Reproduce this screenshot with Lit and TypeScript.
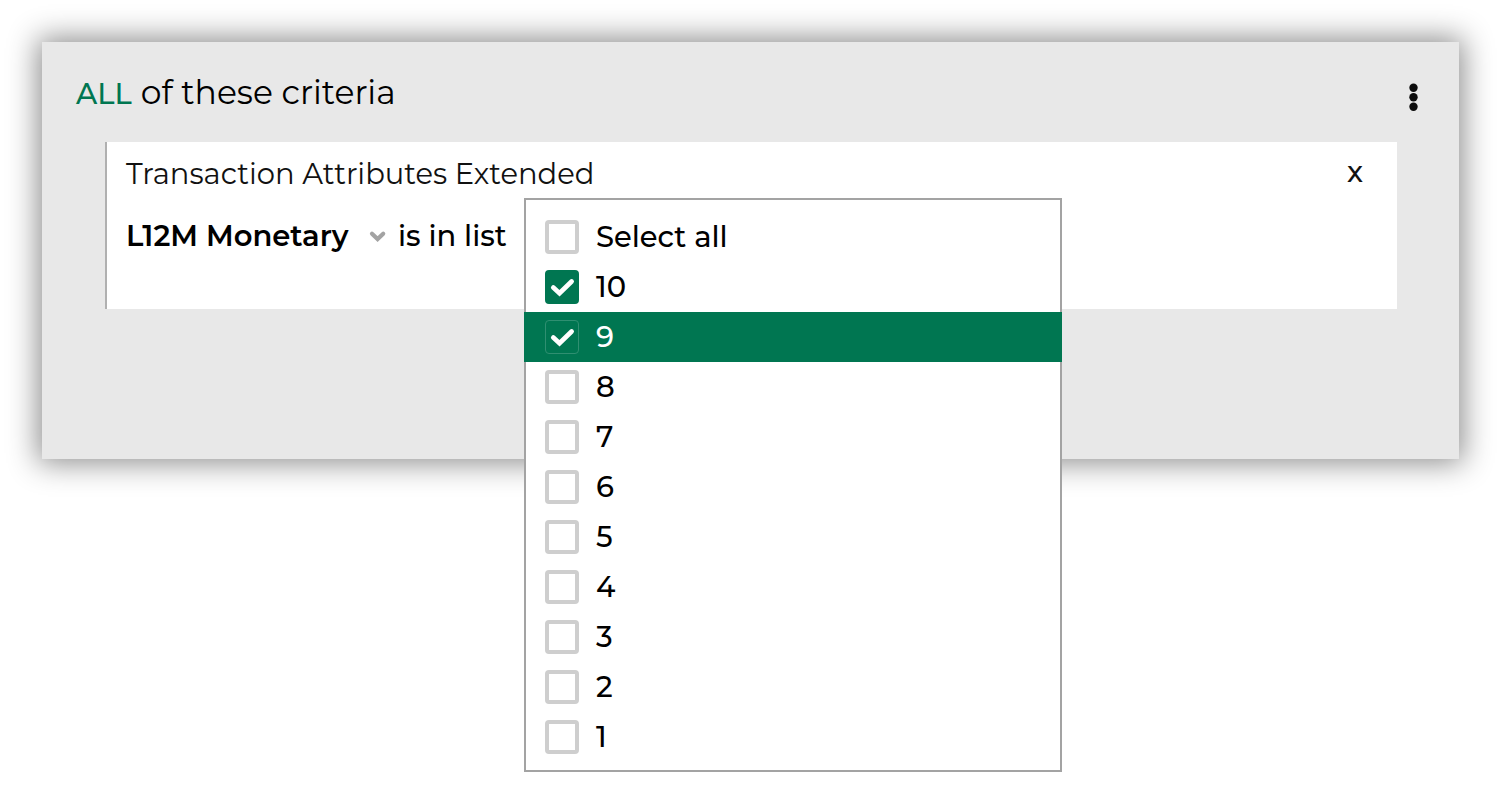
import { LitElement, html, css, svg, nothing } from "lit";
import { customElement, property, state } from "lit/decorators.js";
import { classMap } from "lit/directives/class-map.js";

interface Option {
  value: string;
  checked: boolean;
}

@customElement("check-option")
class CheckOption extends LitElement {
  @property() label = "";
  @property({ type: Boolean }) checked = false;
  @property({ type: Boolean }) active = false;

  static styles = css`
    :host {
      display: block;
    }
    .row {
      display: flex;
      align-items: center;
      gap: 17px;
      height: 50px;
      padding: 0 19px;
      color: #000;
      font-size: 29px;
      line-height: 36px;
      font-weight: 500;
      cursor: pointer;
    }
    .row.active {
      background: #007651;
      color: #fff;
      margin: 0 -2px;
      padding: 0 21px;
    }
    .box {
      display: grid;
      flex: none;
    }
    .box > * {
      grid-area: 1 / 1;
    }
    input {
      appearance: none;
      box-sizing: border-box;
      width: 34px;
      height: 34px;
      margin: 0;
      border: 4px solid #cecece;
      border-radius: 4px;
      background: #fff;
      cursor: pointer;
    }
    input:checked {
      border-color: #007651;
      background: #007651;
    }
    .active input {
      border: 1px solid #2f8f71;
    }
    .active input:checked {
      border-color: #2f8f71;
    }
    .tick {
      width: 34px;
      height: 34px;
      pointer-events: none;
    }
  `;

  render() {
    return html`
      <label class=${classMap({ row: true, active: this.active })}>
        <span class="box">
          <input
            type="checkbox"
            .checked=${this.checked}
            @change=${(e: Event) => {
              this.dispatchEvent(
                new CustomEvent("toggle", { detail: (e.target as HTMLInputElement).checked })
              );
            }}
          />
          ${this.checked
            ? html`<svg class="tick" viewBox="0 0 34 34" aria-hidden="true">
                <path
                  d="M8.3 17.6 L14.5 23.2 L26.6 11.5"
                  fill="none"
                  stroke="#fff"
                  stroke-width="4.7"
                  stroke-linecap="round"
                  stroke-linejoin="miter"
                />
              </svg>`
            : nothing}
        </span>
        <span>${this.label}</span>
      </label>
    `;
  }
}

@customElement("app-root")
class AppRoot extends LitElement {
  @state() private options: Option[] = [10, 9, 8, 7, 6, 5, 4, 3, 2, 1].map((n) => ({
    value: String(n),
    checked: n > 8,
  }));
  @state() private activeValue = "9";

  static styles = css`
    :host {
      display: block;
      box-sizing: border-box;
      min-height: 100vh;
      padding: 42px;
      background: #fff;
      color: #000;
      font-family: Montserrat, Inter, "Open Sans", sans-serif;
      font-size: 29px;
      line-height: 36px;
    }
    button,
    select {
      appearance: none;
      margin: 0;
      padding: 0;
      border: 0;
      background: none;
      color: inherit;
      font: inherit;
      cursor: pointer;
    }
    .panel {
      padding-bottom: 150px;
      background: #e8e8e8;
      box-shadow: 0 0 28px 4px rgba(0, 0, 0, 0.45);
    }
    .head {
      display: flex;
      align-items: center;
      justify-content: space-between;
      height: 100px;
      padding: 0 41px 0 34px;
    }
    .title {
      display: flex;
      align-items: baseline;
      gap: 9px;
      margin: 0;
      padding-top: 2px;
      font-size: 33px;
      line-height: 40px;
      font-weight: 400;
    }
    .match {
      color: #007651;
      font-size: 29px;
      font-weight: 500;
    }
    .more {
      display: block;
      padding-top: 10px;
    }
    .more svg {
      display: block;
    }
    .card {
      margin: 0 62px 0 63px;
      padding: 14px 34px 55px 19px;
      border-left: 2px solid #b0b0b0;
      background: #fff;
    }
    .card-head {
      display: flex;
      align-items: flex-start;
      justify-content: space-between;
    }
    .name {
      margin: 0;
      font-size: 29px;
      line-height: 36px;
      font-weight: 400;
      color: #111;
    }
    .close {
      line-height: 32px;
      font-weight: 500;
      color: #111;
    }
    .rule {
      display: flex;
      margin-top: 26px;
    }
    .field {
      display: flex;
      align-items: center;
      width: 272px;
    }
    .field select {
      width: 243px;
      font-weight: 600;
    }
    .operator {
      width: 126px;
      font-weight: 500;
    }
    .values {
      position: relative;
    }
    .menu {
      position: absolute;
      z-index: 1;
      top: -20px;
      left: 0;
      box-sizing: border-box;
      width: 538px;
      margin: 0;
      padding: 12px 0 8px;
      border: 2px solid #a3a3a3;
      background: #fff;
    }
  `;

  private toggle(value: string, checked: boolean) {
    this.options = this.options.map((o) => (o.value === value ? { ...o, checked } : o));
    this.activeValue = value;
  }

  private toggleAll(checked: boolean) {
    this.options = this.options.map((o) => ({ ...o, checked }));
  }

  render() {
    return html`
      <section class="panel">
        <header class="head">
          <h1 class="title">
            <button class="match" type="button">ALL</button>
            <span>of these criteria</span>
          </h1>
          <button class="more" type="button" aria-label="More actions">
            <svg width="10" height="28" viewBox="0 0 10 28" fill="#0c0c0c" aria-hidden="true">
              ${[4.8, 14.3, 23.8].map((y) => svg`<circle cx="5.5" cy=${y} r="4.2" />`)}
            </svg>
          </button>
        </header>
        <div class="card">
          <div class="card-head">
            <h2 class="name">Transaction Attributes Extended</h2>
            <button class="close" type="button" aria-label="Remove criterion">x</button>
          </div>
          <div class="rule">
            <div class="field">
              <select id="attribute" aria-label="Attribute">
                <option>L12M Monetary</option>
              </select>
              <svg width="18" height="14" viewBox="0 0 18 14" aria-hidden="true">
                <path
                  d="M3 4.7 L8.6 10 L14.2 4.7"
                  fill="none"
                  stroke="#a3a3a3"
                  stroke-width="4.2"
                  stroke-linecap="round"
                />
              </svg>
            </div>
            <span class="operator">is in list</span>
            <div class="values">
              <div class="menu" role="group" aria-label="Values">
                <check-option
                  label="Select all"
                  .checked=${this.options.every((o) => o.checked)}
                  @toggle=${(e: CustomEvent<boolean>) => this.toggleAll(e.detail)}
                ></check-option>
                ${this.options.map(
                  (o) => html`<check-option
                    .label=${o.value}
                    .checked=${o.checked}
                    .active=${o.value === this.activeValue}
                    @toggle=${(e: CustomEvent<boolean>) => this.toggle(o.value, e.detail)}
                  ></check-option>`
                )}
              </div>
            </div>
          </div>
        </div>
      </section>
    `;
  }
}
